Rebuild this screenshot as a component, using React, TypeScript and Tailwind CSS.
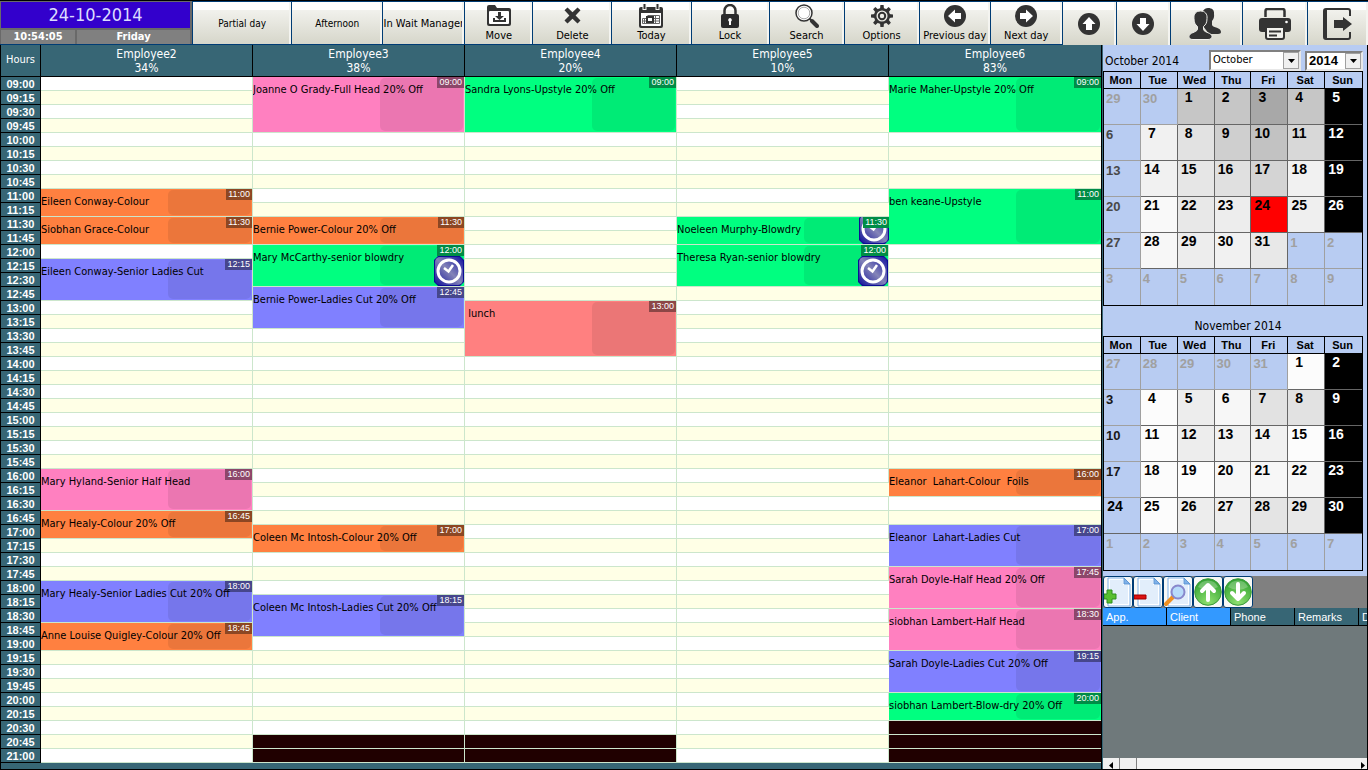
import React from 'react'
import clsx from 'clsx'

type Appointment = {
  start: number // slot index, 0 is 09:00
  span: number
  text: string
  color: string
  clock?: boolean
}

type Employee = {
  name: string
  load: string
  closedFrom?: number
  items: Appointment[]
}

const PINK = 'bg-[#ff80c0]'
const GREEN = 'bg-[#00ff80]'
const ORANGE = 'bg-[#ff8040]'
const BLUE = 'bg-[#8080ff]'
const RED = 'bg-[#ff8080]'

const SLOTS = 49

const slotLabel = (i: number) => {
  const hour = 9 + Math.floor(i / 4)
  const minutes = (i % 4) * 15
  return String(hour).padStart(2, '0') + ':' + String(minutes).padStart(2, '0')
}

const employees: Employee[] = [
  {
    name: 'Employee2',
    load: '34%',
    items: [
      { start: 8, span: 2, text: 'Eileen Conway-Colour', color: ORANGE },
      { start: 10, span: 2, text: 'Siobhan Grace-Colour', color: ORANGE },
      { start: 13, span: 3, text: 'Eileen Conway-Senior Ladies Cut', color: BLUE },
      { start: 28, span: 3, text: 'Mary Hyland-Senior Half Head', color: PINK },
      { start: 31, span: 2, text: 'Mary Healy-Colour 20% Off', color: ORANGE },
      { start: 36, span: 3, text: 'Mary Healy-Senior Ladies Cut 20% Off', color: BLUE },
      { start: 39, span: 2, text: 'Anne Louise Quigley-Colour 20% Off', color: ORANGE },
    ],
  },
  {
    name: 'Employee3',
    load: '38%',
    closedFrom: 47,
    items: [
      { start: 0, span: 4, text: 'Joanne O Grady-Full Head 20% Off', color: PINK },
      { start: 10, span: 2, text: 'Bernie Power-Colour 20% Off', color: ORANGE },
      { start: 12, span: 3, text: 'Mary McCarthy-senior blowdry', color: GREEN, clock: true },
      { start: 15, span: 3, text: 'Bernie Power-Ladies Cut 20% Off', color: BLUE },
      { start: 32, span: 2, text: 'Coleen Mc Intosh-Colour 20% Off', color: ORANGE },
      { start: 37, span: 3, text: 'Coleen Mc Intosh-Ladies Cut 20% Off', color: BLUE },
    ],
  },
  {
    name: 'Employee4',
    load: '20%',
    closedFrom: 47,
    items: [
      { start: 0, span: 4, text: 'Sandra Lyons-Upstyle 20% Off', color: GREEN },
      { start: 16, span: 4, text: ' lunch', color: RED },
    ],
  },
  {
    name: 'Employee5',
    load: '10%',
    items: [
      { start: 10, span: 2, text: 'Noeleen Murphy-Blowdry', color: GREEN, clock: true },
      { start: 12, span: 3, text: 'Theresa Ryan-senior blowdry', color: GREEN, clock: true },
    ],
  },
  {
    name: 'Employee6',
    load: '83%',
    closedFrom: 46,
    items: [
      { start: 0, span: 4, text: 'Marie Maher-Upstyle 20% Off', color: GREEN },
      { start: 8, span: 4, text: 'ben keane-Upstyle', color: GREEN },
      { start: 28, span: 2, text: 'Eleanor  Lahart-Colour  Foils', color: ORANGE },
      { start: 32, span: 3, text: 'Eleanor  Lahart-Ladies Cut', color: BLUE },
      { start: 35, span: 3, text: 'Sarah Doyle-Half Head 20% Off', color: PINK },
      { start: 38, span: 3, text: 'siobhan Lambert-Half Head', color: PINK },
      { start: 41, span: 3, text: 'Sarah Doyle-Ladies Cut 20% Off', color: BLUE },
      { start: 44, span: 2, text: 'siobhan Lambert-Blow-dry 20% Off', color: GREEN },
    ],
  },
]

/* ---------- icons ---------- */

const MoveIcon = () => (
  <svg width="24" height="21" viewBox="0 0 24 21" aria-hidden="true">
    <path d="M0 2q0-2 2-2h6l2 3h12q2 0 2 2v14q0 2-2 2H2q-2 0-2-2z" fill="#333" />
    <path d="M2 7q0-1 1-1h18q1 0 1 1v11q0 1-1 1H3q-1 0-1-1z" fill="#fff" />
    <path d="M11 7h3v4h3l-4.500 4L8 11h3zM6 13h2v2h9v-2h2v4H6z" fill="#333" />
  </svg>
)

const DeleteIcon = () => (
  <svg width="17" height="17" viewBox="0 0 17 17" aria-hidden="true">
    <path d="M3.500 0.500 8.500 5.300 13.500 0.500 16.500 3.300 11.600 8.500 16.500 13.500 13.500 16.500 8.500 11.800 3.500 16.500 0.500 13.500 5.400 8.500 0.500 3.300z" fill="#333" />
  </svg>
)

const TodayIcon = () => (
  <svg width="24" height="24" viewBox="0 0 24 24" aria-hidden="true">
    <path d="M0 5q0-2 2-2h20q2 0 2 2v17q0 2-2 2H2q-2 0-2-2z" fill="#333" />
    <path d="M3.500 0h4v6h-4zM16.500 0h4v6h-4z" fill="#f4f4f0" />
    <path d="M4.500 0h2v5h-2zM17.500 0h2v5h-2z" fill="#333" />
    <path d="M2 9h20v12q0 1-1 1H3q-1 0-1-1z" fill="#fff" />
    <path d="M8.500 11.500h12v8h-17v-5h17M3.500 17h17M16.500 11.500v8M5.500 14.500v5" stroke="#666" fill="none" />
    <path d="M7 12h8v7H7z" fill="#333" />
    <path d="M9 14h4v3H9z" fill="#fff" />
  </svg>
)

const LockIcon = () => (
  <svg width="18" height="24" viewBox="0 0 18 24" aria-hidden="true">
    <path d="M3.500 12V6.500a5.500 5.500 0 0 1 11 0V12" fill="none" stroke="#333" strokeWidth="2.500" />
    <rect y="10" width="18" height="14" rx="2" fill="#2b2b2b" />
    <path d="M9 14a2 2 0 0 1 1 3.600V21H8v-3.400A2 2 0 0 1 9 14z" fill="#fff" />
  </svg>
)

const SearchIcon = () => (
  <svg width="24" height="24" viewBox="0 0 24 24" aria-hidden="true">
    <circle cx="9" cy="9" r="8" fill="#fff" stroke="#333" strokeWidth="1.500" />
    <circle cx="9" cy="9" r="5.800" fill="none" stroke="#aaa" />
    <path d="M14.500 14.500 17 17" stroke="#333" strokeWidth="2" />
    <path d="M17 17l5 5" stroke="#333" strokeWidth="4" strokeLinecap="round" />
  </svg>
)

const OptionsIcon = () => (
  <svg width="22" height="22" viewBox="-11 -11 22 22" aria-hidden="true">
    {[0, 45, 90, 135, 180, 225, 270, 315].map(a => (
      <path key={a} d="M-2-7-1.600-11H1.600L2-7z" fill="#333" transform={`rotate(${a})`} />
    ))}
    <circle r="6.800" fill="none" stroke="#333" strokeWidth="2.500" />
    <circle r="3.200" fill="none" stroke="#333" strokeWidth="2" />
  </svg>
)

const CircleArrow = ({ angle }: { angle: number }) => (
  <svg width="22" height="22" viewBox="-11 -11 22 22" aria-hidden="true">
    <circle r="11" fill="#333" />
    <path d="M0-7 6.500 0H3v6h-6V0h-3.500z" fill="#fff" transform={`rotate(${angle})`} />
  </svg>
)

const PeopleIcon = () => (
  <svg width="34" height="32" viewBox="0 0 34 32" aria-hidden="true">
    <path d="M14 3c1-2 3-3 5-3 4 0 6.500 2 6 6 .5 3-.5 5-2 7v4c1 3 9 2 9 7 0 1-1 2-3 2h-9l-6-8z" fill="#333" />
    <path d="M11.500 3c4.500 0 7 3 6.500 7.500 0 4-1 6-3.500 8v3c1 3.500 8.500 3 8.500 7 0 2-2 3-4 3H4c-3 0-4-1-4-3 0-4 7.500-4 8.500-7v-3C6 16.500 5 14.500 5 10.500 4.500 6 7 3 11.500 3z" fill="#333" stroke="#efefeb" strokeWidth="1" />
  </svg>
)

const PrintIcon = () => (
  <svg width="32" height="32" viewBox="0 0 32 32" aria-hidden="true">
    <path d="M6.500 9V3q0-2 2-2h15q2 0 2 2v6" fill="none" stroke="#333" strokeWidth="2.500" />
    <path d="M3 10h26q3 0 3 3v8q0 3-3 3H3q-3 0-3-3v-8q0-3 3-3z" fill="#333" />
    <circle cx="27.500" cy="14" r="1.300" fill="#fff" />
    <path d="M7 19h18v10q0 2-2 2H9q-2 0-2-2z" fill="#f2f2ee" stroke="#333" strokeWidth="2" />
    <path d="M10 23.500h12M10 27.500h8" stroke="#333" strokeWidth="2" />
  </svg>
)

const ExitIcon = () => (
  <svg width="30" height="32" viewBox="0 0 30 32" aria-hidden="true">
    <path d="M27 8V3q0-2-2-2H3Q1 1 1 3v26q0 2 2 2h22q2 0 2-2v-5" fill="none" stroke="#333" strokeWidth="2" />
    <path d="M1 2h3v28H1z" fill="#333" />
    <path d="M11 12h9V9l9 7-9 7v-3h-9z" fill="#333" />
  </svg>
)

const ClockIcon = () => (
  <svg width="30" height="30" viewBox="0 0 30 30" aria-hidden="true">
    <defs>
      <linearGradient id="clockFace" x1="1" y1="0" x2="0" y2="1">
        <stop offset="0" stopColor="#1414a0" />
        <stop offset="0.500" stopColor="#8484b8" />
        <stop offset="1" stopColor="#10109a" />
      </linearGradient>
    </defs>
    <path d="M4 0h22l4 4v22l-4 4H4l-4-4V4z" fill="#0c0c96" />
    <rect x="1" y="1" width="28" height="28" rx="5" fill="url(#clockFace)" />
    <circle cx="15" cy="15" r="11" fill="none" stroke="#fff" strokeWidth="3" />
    <path d="M10 12l4.500 3.500L19 9" fill="none" stroke="#fff" strokeWidth="2.500" />
  </svg>
)

const Sheet = ({ children }: { children: React.ReactNode }) => (
  <svg width="28" height="30" viewBox="0 0 28 30" aria-hidden="true">
    <path d="M4 1h16l6 6v22H4z" fill="#fff" stroke="#7fb0e6" />
    <path d="M6 3h13v5h5v19H6z" fill="#e2eefb" />
    <path d="M20 1l6 6h-6z" fill="#7fb0e6" stroke="#5d97d8" />
    {children}
  </svg>
)

const GreenBall = ({ angle }: { angle: number }) => (
  <svg width="28" height="28" viewBox="-14 -14 28 28" aria-hidden="true">
    <defs>
      <radialGradient id="ball" cx="0.500" cy="0.900" r="0.900">
        <stop offset="0" stopColor="#8fe070" />
        <stop offset="1" stopColor="#2fa02f" />
      </radialGradient>
    </defs>
    <circle r="13.300" fill="url(#ball)" stroke="#3c9a3c" />
    <path d="M-10-5a11 11 0 0 1 20 0Q0 1-10-5z" fill="#fff" opacity="0.250" />
    <path d="M0 8V-6M-6-1 0-7 6-1" fill="none" stroke="#fff" strokeWidth="4" strokeLinecap="round" strokeLinejoin="round" transform={`rotate(${angle})`} />
  </svg>
)

/* ---------- toolbar ---------- */

const tools: { label: string; icon?: React.ReactNode; iconOnly?: boolean; big?: boolean }[] = [
  { label: 'Partial day' },
  { label: 'Afternoon' },
  { label: 'In Wait Manager', big: true },
  { label: 'Move', icon: <MoveIcon /> },
  { label: 'Delete', icon: <DeleteIcon /> },
  { label: 'Today', icon: <TodayIcon /> },
  { label: 'Lock', icon: <LockIcon /> },
  { label: 'Search', icon: <SearchIcon /> },
  { label: 'Options', icon: <OptionsIcon /> },
  { label: 'Previous day', icon: <CircleArrow angle={-90} /> },
  { label: 'Next day', icon: <CircleArrow angle={90} /> },
  { label: 'Up', icon: <CircleArrow angle={0} />, iconOnly: true },
  { label: 'Down', icon: <CircleArrow angle={180} />, iconOnly: true },
  { label: 'Clients', icon: <PeopleIcon />, iconOnly: true },
  { label: 'Print', icon: <PrintIcon />, iconOnly: true },
  { label: 'Exit', icon: <ExitIcon />, iconOnly: true },
]

const Toolbar = () => (
  <header className="grid h-[45px] grid-cols-[192fr_99fr_91fr_82fr_68fr_79fr_79fr_78fr_75fr_75fr_71fr_72fr_54fr_54fr_72fr_65fr_61fr] border-t border-black bg-[#003c74]">
    <div className="flex h-[43px] flex-col gap-[2px] bg-[#696969] pt-px pr-[2px] pl-px text-white">
      <div className="flex h-[26px] items-center justify-center bg-[#3300cc] text-[18px] leading-[26px] text-[#dcdcff]">24-10-2014</div>
      <div className="flex h-[14px] gap-[2px] text-center text-[11px] leading-[14px] font-bold">
        <span className="w-[74px] bg-[#808080]">10:54:05</span>
        <span className="flex-1 bg-[#808080]">Friday</span>
      </div>
    </div>
    {tools.map(({ label, icon, iconOnly, big }) => (
      <button
        key={label}
        type="button"
        aria-label={label}
        className={clsx(
          'mt-px ml-px flex flex-col items-center overflow-hidden border-r-2 border-[#f4f4f0] bg-linear-to-b from-[#f8f8f5] to-[#d6d6ca] pl-[2px] whitespace-nowrap shadow-[inset_0_8px_0_#fff]',
          iconOnly ? 'h-[43px] justify-center' : 'h-[42px]',
          !icon && 'justify-center pt-[2px]',
          big || icon ? 'text-[11px]' : 'text-[10px]',
        )}
      >
        {icon && <span className={clsx('flex items-center', !iconOnly && 'h-[27px]')}>{icon}</span>}
        {!iconOnly && <span className="leading-[14px]">{label}</span>}
      </button>
    ))}
  </header>
)

/* ---------- schedule ---------- */

const EmptySlot = ({ slot, closed }: { slot: number; closed: boolean }) => (
  <td
    className={clsx(
      'border-r border-b border-[#cce6cc] p-0 last:border-r-0',
      closed ? 'bg-[#200000]' : slot % 2 ? 'bg-[#ffffe6]' : 'bg-white',
    )}
  />
)

const AppointmentCell = ({ item }: { item: Appointment }) => (
  <td rowSpan={item.span} className={clsx('relative overflow-hidden border-r border-b border-[#cce6cc] p-0 align-top last:border-r-0', item.color)}>
    <div className="absolute inset-y-px right-px left-[60%] rounded-[5px] bg-black/8" />
    {item.clock && (
      <span className="absolute right-0 bottom-0">
        <ClockIcon />
      </span>
    )}
    <span className={clsx("absolute top-0 right-0 h-[11px] bg-linear-to-r from-black/45 to-black/45 px-[2px] font-['Liberation_Sans',sans-serif] text-[9px] leading-[11px] text-white", item.color)}>
      {slotLabel(item.start)}
    </span>
    <div className="relative pt-[6px] text-[11px] leading-[14px] whitespace-pre">{item.text}</div>
  </td>
)

const Schedule = () => (
  <main className="flex min-w-0 flex-1 flex-col border-r border-l border-black bg-[#376675]">
    <table className="w-full table-fixed border-separate border-spacing-0">
      <thead>
        <tr className="h-[32px] text-white">
          <th scope="col" className="w-10 border-r border-b border-black p-0 text-[11px] font-normal">Hours</th>
          {employees.map(e => (
            <th key={e.name} scope="col" className="border-r border-b border-black p-0 text-[12px] leading-[14px] font-normal last:border-r-0">
              {e.name}
              <br />
              {e.load}
            </th>
          ))}
        </tr>
      </thead>
      <tbody>
        {Array.from({ length: SLOTS }, (_, slot) => (
          <tr key={slot} className="h-[14px]">
            <th scope="row" className="border-r border-b border-black p-0 pt-[2px] font-['Liberation_Sans',sans-serif] text-[11px] leading-[11px] text-white">
              {slotLabel(slot)}
            </th>
            {employees.map(e => {
              const item = e.items.find(i => slot >= i.start && slot < i.start + i.span)
              if (item) return item.start === slot ? <AppointmentCell key={e.name} item={item} /> : null
              return <EmptySlot key={e.name} slot={slot} closed={e.closedFrom !== undefined && slot >= e.closedFrom} />
            })}
          </tr>
        ))}
      </tbody>
    </table>
    <div className="mt-auto h-[6px]" />
  </main>
)

/* ---------- month calendars ---------- */

const weekDays = ['Mon', 'Tue', 'Wed', 'Thu', 'Fri', 'Sat', 'Sun']

// out = day of another month, mon = closed Monday, anything else is the cell fill
type Day = [number, string]

const SUN = 'bg-black text-white'

const october: Day[][] = [
  [[29, 'out'], [30, 'out'], [1, 'bg-[#c6c6c6]'], [2, 'bg-[#c6c6c6]'], [3, 'bg-[#a8a8a8]'], [4, 'bg-[#c6c6c6]'], [5, SUN]],
  [[6, 'mon'], [7, 'bg-[#f1f1f1]'], [8, 'bg-[#e2e2e2]'], [9, 'bg-[#cfcfcf]'], [10, 'bg-[#c2c2c2]'], [11, 'bg-[#d8d8d8]'], [12, SUN]],
  [[13, 'mon'], [14, 'bg-[#f1f1f1]'], [15, 'bg-[#e6e6e6]'], [16, 'bg-[#e0e0e0]'], [17, 'bg-[#d4d4d4]'], [18, 'bg-[#f1f1f1]'], [19, SUN]],
  [[20, 'mon'], [21, 'bg-[#f9f9f9]'], [22, 'bg-[#e8e8e8]'], [23, 'bg-[#ededed]'], [24, 'bg-[#ff0000]'], [25, 'bg-[#efefef]'], [26, SUN]],
  [[27, 'mon'], [28, 'bg-[#f7f7f7]'], [29, 'bg-[#ededed]'], [30, 'bg-[#f1f1f1]'], [31, 'bg-[#e8e8e8]'], [1, 'out'], [2, 'out']],
  [[3, 'out'], [4, 'out'], [5, 'out'], [6, 'out'], [7, 'out'], [8, 'out'], [9, 'out']],
]

const november: Day[][] = [
  [[27, 'out'], [28, 'out'], [29, 'out'], [30, 'out'], [31, 'out'], [1, 'bg-[#fcfcfc]'], [2, SUN]],
  [[3, 'mon'], [4, 'bg-[#fcfcfc]'], [5, 'bg-[#ededed]'], [6, 'bg-[#f7f7f7]'], [7, 'bg-[#e2e2e2]'], [8, 'bg-[#e2e2e2]'], [9, SUN]],
  [[10, 'mon'], [11, 'bg-[#fcfcfc]'], [12, 'bg-[#ededed]'], [13, 'bg-[#f1f1f1]'], [14, 'bg-[#f1f1f1]'], [15, 'bg-[#fcfcfc]'], [16, SUN]],
  [[17, 'mon'], [18, 'bg-[#fcfcfc]'], [19, 'bg-[#fcfcfc]'], [20, 'bg-[#f7f7f7]'], [21, 'bg-[#f7f7f7]'], [22, 'bg-[#f7f7f7]'], [23, SUN]],
  [[24, 'bg-[#b8ccf2]'], [25, 'bg-[#fcfcfc]'], [26, 'bg-[#ededed]'], [27, 'bg-[#ededed]'], [28, 'bg-[#e4e4e4]'], [29, 'bg-[#e8e8e8]'], [30, SUN]],
  [[1, 'out'], [2, 'out'], [3, 'out'], [4, 'out'], [5, 'out'], [6, 'out'], [7, 'out']],
]

const Month = ({ weeks, name, monday }: { weeks: Day[][]; name: string; monday: string }) => (
  <table aria-label={name} className="w-full table-fixed border-separate border-spacing-0 border border-black font-['Liberation_Sans',sans-serif]">
    <thead>
      <tr className="h-[17px]">
        {weekDays.map(d => (
          <th key={d} scope="col" className="border-r border-b border-black p-0 pr-[2px] text-[11px] leading-[14px] font-bold last:border-r-0">
            {d}
          </th>
        ))}
      </tr>
    </thead>
    <tbody>
      {weeks.map((week, w) => (
        <tr key={w} className="h-[36px]">
          {week.map(([n, kind]) => {
            const plain = kind === 'out' || kind === 'mon'
            return (
              <td
                key={n + kind}
                className={clsx(
                  'border-r border-b p-0 align-top font-bold last:border-r-0',
                  w === weeks.length - 1 && 'border-b-0',
                  kind === 'out' && 'border-[#a0a0a0] text-[#a0a0a0]',
                  kind === 'mon' && 'border-[#a0a0a0] ' + monday,
                  !plain && 'border-[#666666] ' + kind,
                )}
              >
                <span className={clsx('block', plain ? 'pt-[3px] pl-[2px] text-[13px] leading-[14px]' : 'w-[22px] text-center text-[14px] leading-[17px]')}>{n}</span>
              </td>
            )
          })}
        </tr>
      ))}
    </tbody>
  </table>
)

const Picker = ({ label, value, className }: { label: string; value: string; className: string }) => (
  <div className={clsx('relative border-2 border-t-[#808080] border-r-[#e8e8e8] border-b-[#e8e8e8] border-l-[#808080] bg-white', className)}>
    <select aria-label={label} defaultValue={value} className="block h-full w-full appearance-none pl-[2px] outline-none">
      <option>{value}</option>
    </select>
    <span className="pointer-events-none absolute inset-y-0 right-0 flex w-[16px] items-center justify-center border border-[#a0a0a0] bg-[#f0f0f0]">
      <svg width="7" height="4" viewBox="0 0 7 4" aria-hidden="true">
        <path d="M0 0h7L3.500 4z" fill="#000" />
      </svg>
    </span>
  </div>
)

/* ---------- waiting list ---------- */

const listTools = [
  {
    label: 'Add',
    icon: (
      <Sheet>
        <path d="M3 13h5v4h4v5H8v4H3v-4H0v-5h3z" fill="#58c030" stroke="#2f8f1f" />
      </Sheet>
    ),
  },
  {
    label: 'Remove',
    icon: (
      <Sheet>
        <path d="M0 18h12v4H0z" fill="#dd1111" stroke="#a00000" />
      </Sheet>
    ),
  },
  {
    label: 'Find',
    icon: (
      <Sheet>
        <path d="M2 27l7-7" stroke="#f09020" strokeWidth="4" strokeLinecap="round" />
        <circle cx="14" cy="15" r="6.500" fill="#b8dcfa" stroke="#8888cc" strokeWidth="2" />
      </Sheet>
    ),
  },
  { label: 'Move up', icon: <GreenBall angle={0} /> },
  { label: 'Move down', icon: <GreenBall angle={180} /> },
]

const columns = ['App.', 'Client', 'Phone', 'Remarks', 'D']

const WaitingList = () => (
  <section className="flex flex-1 flex-col overflow-hidden bg-[#6f797b]">
    <div className="flex h-[32px] bg-[#808080]">
      {listTools.map(t => (
        <button key={t.label} type="button" aria-label={t.label} className="flex h-[32px] w-[30px] items-center justify-center overflow-hidden rounded-[3px] border border-[#003c74] bg-[#f8f8f5]">
          {t.icon}
        </button>
      ))}
    </div>
    <div className="flex-1 overflow-hidden">
      <table className="w-[320px] table-fixed border-separate border-spacing-0">
        <thead>
          <tr className="h-[18px] text-left font-['Liberation_Sans',sans-serif] text-[11px] leading-[14px] text-white">
            {columns.map((c, i) => (
              <th key={c} scope="col" className={clsx('border-r border-b border-black p-0 pl-[3px] font-normal', i < 2 ? 'bg-[#3399ff]' : 'bg-[#376675]')}>
                {c}
              </th>
            ))}
          </tr>
        </thead>
      </table>
    </div>
    <div className="flex h-[11px] overflow-hidden bg-[#f4f4f4]">
      <button type="button" aria-label="Scroll left" className="flex w-[17px] items-end justify-center border-r border-[#808080] bg-[#f0f0f0]">
        <svg width="4" height="7" viewBox="0 0 4 7" aria-hidden="true">
          <path d="M4 0v7L0 3.500z" />
        </svg>
      </button>
      <span className="w-[17px] border-r border-[#808080] bg-[#f0f0f0]" />
      <button type="button" aria-label="Scroll right" className="ml-auto flex w-[6px] items-end bg-[#f0f0f0]">
        <svg width="4" height="7" viewBox="0 0 4 7" aria-hidden="true">
          <path d="M0 0v7l4-3.500z" />
        </svg>
      </button>
    </div>
  </section>
)

const Sidebar = () => (
  <aside className="flex w-[266px] shrink-0 flex-col border-r border-l border-r-black border-l-[#376675] bg-[#b8ccf2]">
    <div className="pr-[4px]">
      <div className="flex h-[26px] items-end gap-1 pl-[2px]">
        <h2 className="flex-1 pb-[2px] text-[12px] leading-[16px] whitespace-nowrap">October 2014</h2>
        <Picker label="Month" value="October" className="h-[21px] w-[92px] text-[11px]" />
        <Picker label="Year" value="2014" className="h-[20px] w-[58px] font-['Liberation_Sans',sans-serif] text-[13px] leading-[16px] font-bold" />
      </div>
      <Month weeks={october} name="October 2014" monday="text-[#484848]" />
      <h2 className="pt-[12px] pb-[2px] pl-[10px] text-center text-[12px] leading-[16px]">November 2014</h2>
      <Month weeks={november} name="November 2014" monday="text-[#181818]" />
    </div>
    <div className="h-[5px]" />
    <WaitingList />
  </aside>
)

export default function App() {
  return (
    <div className="flex min-h-screen flex-col border-b border-black bg-[#376675] font-['DejaVu_Sans_Condensed','DejaVu_Sans',sans-serif] text-black">
      <Toolbar />
      <div className="flex flex-1">
        <Schedule />
        <Sidebar />
      </div>
    </div>
  )
}
